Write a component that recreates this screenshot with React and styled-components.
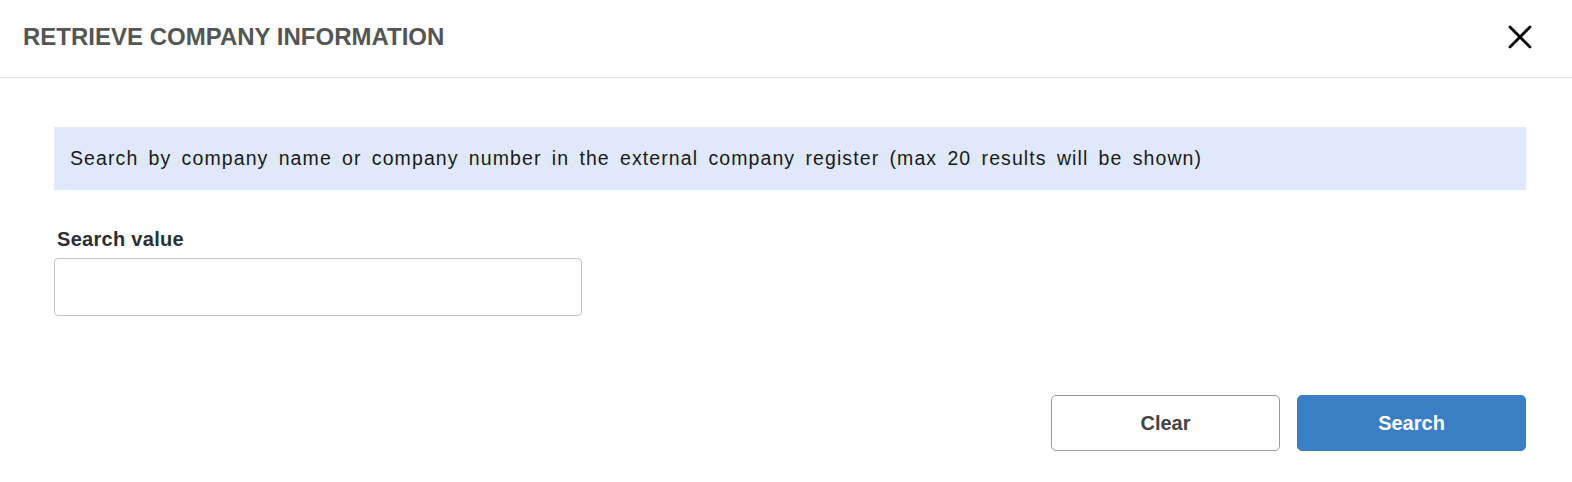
import React from "react";
import styled, { createGlobalStyle } from "styled-components";

const GlobalStyle = createGlobalStyle`
  body {
    margin: 0;
    background: #ffffff;
    font-family: "Liberation Sans", Arial, Helvetica, sans-serif;
  }
`;

const StyledModal = styled.div`
  width: 1572px;
  height: 482px;
  background: #fff;
  box-sizing: border-box;
`;

const StyledHeader = styled.div`
  height: 78px;
  box-sizing: border-box;
  border-bottom: 1px solid #e6e6e6;
  display: flex;
  align-items: center;
  justify-content: space-between;
  padding: 0 39px 4px 23px;
`;

const StyledTitle = styled.h2`
  margin: 0;
  font-size: 24px;
  font-weight: 700;
  color: #555555;
`;

const StyledClose = styled.button`
  border: none;
  background: none;
  padding: 0;
  width: 26px;
  height: 26px;
  display: flex;
  align-items: center;
  justify-content: center;
  cursor: pointer;
`;

const StyledBody = styled.div`
  padding: 49px 46px 0 54px;
`;

const StyledInfo = styled.div`
  height: 63px;
  background: #dfe9fb;
  display: flex;
  align-items: center;
  padding-left: 16px;
  font-size: 19.5px;
  letter-spacing: 1.1px;
  word-spacing: 3.7px;
  color: #1a1a1a;
`;

const StyledField = styled.div`
  display: flex;
  flex-direction: column;
  gap: 8px;
  margin-top: 38px;
`;

const StyledLabel = styled.label`
  font-size: 20px;
  line-height: 22px;
  font-weight: 700;
  letter-spacing: 0.3px;
  color: #2a2f35;
  padding-left: 3px;
`;

const StyledInput = styled.input`
  width: 528px;
  height: 58px;
  box-sizing: border-box;
  border: 1px solid #c4c4c4;
  border-radius: 4px;
  font-size: 18px;
  padding: 0 12px;
  outline: none;
`;

const StyledActions = styled.div`
  display: flex;
  justify-content: flex-end;
  gap: 17px;
  margin-top: 79px;
`;

const StyledButton = styled.button`
  width: 229px;
  height: 56px;
  box-sizing: border-box;
  border-radius: 5px;
  font-family: inherit;
  font-size: 20px;
  font-weight: 700;
  cursor: pointer;
  border: 1px solid ${(p) => (p.$primary ? "#3a7fc4" : "#9a9a9a")};
  background: ${(p) => (p.$primary ? "#3a7fc4" : "#ffffff")};
  color: ${(p) => (p.$primary ? "#ffffff" : "#444444")};
`;

export default function App() {
  return (
    <StyledModal>
      <GlobalStyle />
      <StyledHeader>
        <StyledTitle>RETRIEVE COMPANY INFORMATION</StyledTitle>
        <StyledClose aria-label="Close">
          <svg width="24" height="24" viewBox="0 0 24 24">
            <path
              d="M2 2 L22 22 M22 2 L2 22"
              stroke="#000"
              strokeWidth="2.8"
              strokeLinecap="round"
            />
          </svg>
        </StyledClose>
      </StyledHeader>
      <StyledBody>
        <StyledInfo>
          Search by company name or company number in the external company register (max 20 results will be shown)
        </StyledInfo>
        <StyledField>
          <StyledLabel htmlFor="search-value">Search value</StyledLabel>
          <StyledInput id="search-value" type="text" />
        </StyledField>
        <StyledActions>
          <StyledButton>Clear</StyledButton>
          <StyledButton $primary>Search</StyledButton>
        </StyledActions>
      </StyledBody>
    </StyledModal>
  );
}
